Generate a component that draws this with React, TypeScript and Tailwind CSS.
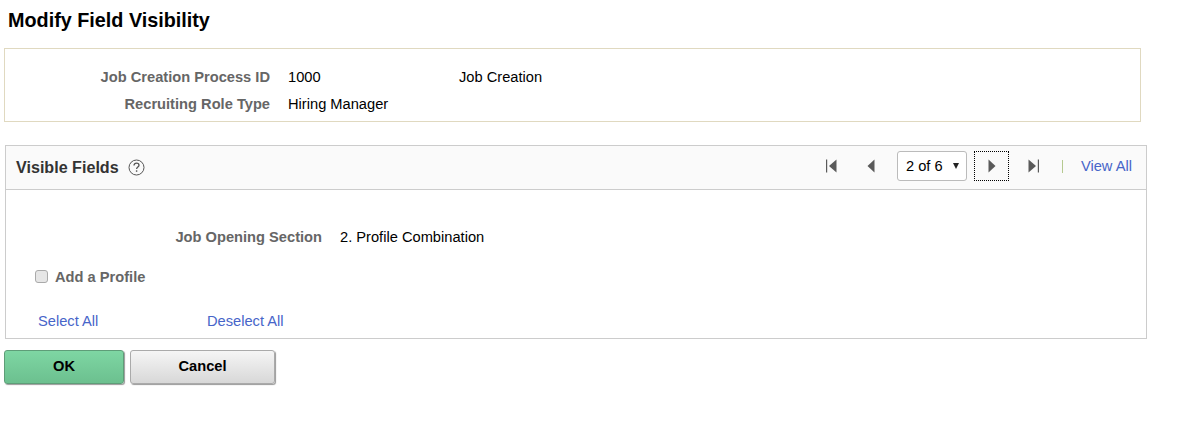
import React from "react";

const Triangle = ({ dir }: { dir: "left" | "right" }) => (
  <svg width="8" height="14" viewBox="0 0 8 14" className="block">
    <path d={dir === "left" ? "M7.5 0.5V13.5L0.5 7Z" : "M0.5 0.5V13.5L7.5 7Z"} fill="#5a5a5a" />
  </svg>
);

const FirstIcon = () => (
  <svg width="11" height="14" viewBox="0 0 11 14" className="block">
    <rect x="0" y="0.5" width="1.2" height="13" fill="#5a5a5a" />
    <path d="M10.5 0.5V13.5L3 7Z" fill="#5a5a5a" />
  </svg>
);

const LastIcon = () => (
  <svg width="11" height="14" viewBox="0 0 11 14" className="block">
    <path d="M0.5 0.5V13.5L8 7Z" fill="#5a5a5a" />
    <rect x="9.8" y="0.5" width="1.2" height="13" fill="#5a5a5a" />
  </svg>
);

const HelpIcon = () => (
  <svg width="17" height="17" viewBox="0 0 17 17" className="block">
    <circle cx="8.5" cy="8.5" r="7.5" fill="none" stroke="#555" strokeWidth="1" />
    <path d="M6 6.6C6 5.1 7.1 4.2 8.5 4.2C10 4.2 11 5.1 11 6.3C11 8 8.6 8.1 8.6 10" fill="none" stroke="#555" strokeWidth="1.3" />
    <rect x="7.9" y="11.3" width="1.4" height="1.5" fill="#555" />
  </svg>
);

export default function App() {
  return (
    <div className="h-[433px] w-[1202px] overflow-hidden bg-white font-['Liberation_Sans',Arial,sans-serif] text-[14.67px] text-black">
      <h1 className="pl-2 pt-[9px] text-[19.8px] font-bold leading-[22px]">Modify Field Visibility</h1>

      <div className="ml-1 mt-[17px] h-[74px] w-[1137px] border border-[#e0d9c0] pt-[14px]">
        <div className="flex h-[27px] items-center">
          <span className="w-[265px] text-right font-bold text-[#666]">Job Creation Process ID</span>
          <span className="ml-[18px] w-[171px]">1000</span>
          <span>Job Creation</span>
        </div>
        <div className="flex h-[27px] items-center">
          <span className="w-[265px] text-right font-bold text-[#666]">Recruiting Role Type</span>
          <span className="ml-[18px]">Hiring Manager</span>
        </div>
      </div>

      <div className="ml-[5px] mt-[23px] h-[194px] w-[1142px] border border-[#ccc]">
        <div className="flex h-[44px] items-center border-b border-[#ccc] bg-[#fafafa]">
          <span className="ml-[10px] text-[16.13px] font-bold text-[#333]">Visible Fields</span>
          <span className="ml-[9px]"><HelpIcon /></span>
          <div className="ml-auto flex items-center pb-[3px]">
            <FirstIcon />
            <span className="ml-[30px]"><Triangle dir="left" /></span>
            <div className="ml-[22px] flex h-[30px] w-[70px] items-center justify-between rounded-[3px] border border-[#bbb] bg-white pl-[8px] pr-[7px]">
              <span>2 of 6</span>
              <span className="h-0 w-0 border-x-[3.5px] border-t-[6px] border-x-transparent border-t-[#222]" />
            </div>
            <div className="ml-[7px] flex h-[30px] w-[35px] items-center justify-center border border-dotted border-black pl-[2px]">
              <Triangle dir="right" />
            </div>
            <span className="ml-[19px]"><LastIcon /></span>
            <span className="ml-[23px] h-[13px] w-px bg-[#b5c98f]" />
            <a className="ml-[18px] mr-[14px] text-[#4765c9]">View All</a>
          </div>
        </div>

        <div className="flex h-[58px] items-end">
          <span className="w-[316px] text-right font-bold text-[#666]">Job Opening Section</span>
          <span className="ml-[18px]">2. Profile Combination</span>
        </div>

        <div className="ml-[29px] mt-[20px] flex h-[18px] items-center">
          <span className="mb-[2px] h-[13px] w-[13px] rounded-[3px] border border-[#aaa] bg-[#e6e6e6]" />
          <span className="ml-[7px] font-bold text-[#666]">Add a Profile</span>
        </div>

        <div className="ml-[32px] mt-[24px] flex">
          <a className="w-[169px] text-[#4765c9]">Select All</a>
          <a className="text-[#4765c9]">Deselect All</a>
        </div>
      </div>

      <div className="ml-1 mt-[11px] flex gap-[6px]">
        <button className="h-[34px] w-[120px] rounded-[3px] border border-[#5e9d78] bg-gradient-to-b from-[#7ed6a3] to-[#6cc08f] pb-[2px] font-bold shadow-[1px_1px_1px_#999]">OK</button>
        <button className="h-[34px] w-[145px] rounded-[3px] border border-[#aaa] bg-gradient-to-b from-[#f5f5f5] to-[#d8d8d8] pb-[2px] font-bold shadow-[1px_1px_1px_#999]">Cancel</button>
      </div>
    </div>
  );
}
